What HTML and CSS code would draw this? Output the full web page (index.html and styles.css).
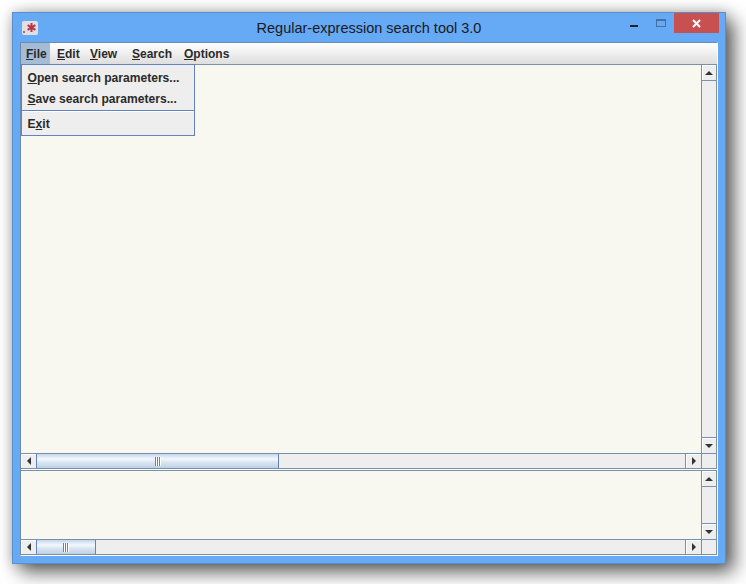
FILE: index.html
```html
<!DOCTYPE html>
<html lang="en">
<head>
<meta charset="utf-8">
<title>Regular-expression search tool 3.0</title>
<link rel="stylesheet" href="styles.css">
</head>
<body>
<div class="window">
  <header class="titlebar">
    <span class="appicon"><svg width="16" height="14" viewBox="0 0 16 14"><rect x="0" y="0" width="16" height="14" rx="2" fill="#e2dfe0"/><rect x="1" y="10" width="2" height="2" fill="#c0606c"/><path d="M9.5 2v9M5.6 4.2l7.8 4.6M13.4 4.2l-7.8 4.6" stroke="#b8364a" stroke-width="2" fill="none"/></svg></span>
    <span class="title">Regular-expression search tool 3.0</span>
    <div class="controls">
      <span class="ctl min"></span>
      <span class="ctl max"></span>
      <span class="ctl close"><svg width="9" height="9" viewBox="0 0 9 9"><path d="M1 1l7 7M8 1l-7 7" stroke="#fff" stroke-width="2" fill="none"/></svg></span>
    </div>
  </header>
  <div class="client">
    <nav class="menubar">
      <span class="menu m-file active"><u>F</u>ile</span>
      <span class="menu m-edit"><u>E</u>dit</span>
      <span class="menu m-view"><u>V</u>iew</span>
      <span class="menu m-search"><u>S</u>earch</span>
      <span class="menu"><u>O</u>ptions</span>
    </nav>
    <div class="dropdown">
      <div class="item"><u>O</u>pen search parameters...</div>
      <div class="item"><u>S</u>ave search parameters...</div>
      <div class="sep"></div>
      <div class="item exit">E<u>x</u>it</div>
    </div>
    <section class="pane top">
      <div class="text"></div>
      <div class="vbar">
        <span class="btn up"><i></i></span>
        <span class="track"></span>
        <span class="btn down"><i></i></span>
      </div>
      <div class="hbar">
        <span class="btn left"><i></i></span>
        <span class="htrack"><span class="thumb wide"><b></b></span></span>
        <span class="btn right"><i></i></span>
      </div>
      <div class="corner"></div>
    </section>
    <div class="divider"></div>
    <section class="pane bottom">
      <div class="text"></div>
      <div class="vbar">
        <span class="btn up"><i></i></span>
        <span class="track"></span>
        <span class="btn down"><i></i></span>
      </div>
      <div class="hbar">
        <span class="btn left"><i></i></span>
        <span class="htrack"><span class="thumb narrow"><b></b></span></span>
        <span class="btn right"><i></i></span>
      </div>
      <div class="corner"></div>
    </section>
  </div>
</div>
</body>
</html>
```
FILE: styles.css
```css
* { box-sizing: border-box; }
html, body { margin: 0; height: 584px; background: #fff; overflow: hidden; }
body { padding: 12px 20px 20px 12px; font-family: "Liberation Sans", Arial, sans-serif; }
.window {
  width: 714px; height: 552px;
  background: #66a9f5;
  border: 1px solid #5b8fc9;
  padding: 0 7px 7px;
  display: flex; flex-direction: column;
  box-shadow: 8px 8px 18px rgba(0,0,0,.62), 0 0 12px rgba(0,0,0,.22);
}
.titlebar { height: 29px; flex: none; display: flex; align-items: center; position: relative; }
.appicon { width: 16px; height: 14px; margin-left: 2px; margin-top: 1px; display: flex; }
.title { position: absolute; left: 0; right: 0; top: 6px; text-align: center; font-size: 14.5px; line-height: 18px; color: #1a1a1a; }
.controls { position: absolute; right: -1px; top: 0; display: flex; height: 20px; }
.ctl { display: flex; align-items: center; justify-content: center; }
.min { width: 8px; height: 2px; background: #222; margin-top: 12px; margin-right: 18px; }
.max { width: 10px; height: 8px; border: 1px solid #46709f; border-top-width: 2px; margin-top: 6px; margin-right: 8px; }
.close { width: 45px; height: 20px; background: #c75050; }
.client {
  flex: 1; background: #fff;
  border-top: 1px solid #6d8db0; border-left: 1px solid #6b89a8; border-right: 1px solid #fff; border-bottom: 1px solid #fff;
  display: flex; flex-direction: column; position: relative;
  overflow: hidden;
}
.menubar {
  height: 22px; flex: none; display: flex;
  background: linear-gradient(#ffffff, #dedede);
  border-bottom: 1px solid #7a8fa8;
  font-size: 12px; font-weight: bold; color: #2a2a2a;
}
.menu { padding: 1px 0 0 7px; line-height: 20px; }
.m-file { width: 29px; padding-left: 5px; }
.m-edit { width: 33px; }
.m-view { width: 42px; }
.m-search { width: 52px; }
.active { background: #a4bcd6; }
.dropdown {
  position: absolute; left: 0; top: 21px; width: 174px; z-index: 2;
  background: #eeeeee; border: 1px solid #6382bf;
  font-size: 12.1px; font-weight: bold; color: #2a2a2a;
  padding-top: 3px;
}
.item { height: 21px; line-height: 20px; padding-left: 5.5px; }
.sep { height: 1px; background: #6382bf; margin: 0 0 3px; box-shadow: 0 1px 0 #fff; }
.pane { display: grid; grid-template-columns: 681px 14px; background: #eeeeee; border-right: 1px solid #7a8fa8; border-bottom: 1px solid #7a8fa8; }
.top { grid-template-rows: 389px 14px; }
.bottom { grid-template-rows: 69px 14px; border-top: 1px solid #7a8fa8; }
.divider { height: 1px; background: #fff; flex: none; }
.text { background: #f8f7f0; border-right: 1px solid #7a8fa8; border-bottom: 1px solid #7a8fa8; }
.vbar { display: flex; flex-direction: column; background: #eeeeee; border-bottom: 1px solid #7a8fa8; }
.track { flex: 1; }
.hbar { display: flex; height: 14px; background: #eeeeee; border-right: 1px solid #7a8fa8; }
.htrack { flex: 1; display: flex; }
.corner { background: #eeeeee; }
.btn { flex: none; display: flex; align-items: center; justify-content: center; background: #eeeeee; }
.vbar .btn { height: 16px; }
.vbar .up { border-bottom: 1px solid #7a8fa8; box-shadow: inset 1px 1px 0 #fff; }
.vbar .down { border-top: 1px solid #7a8fa8; box-shadow: inset 1px 1px 0 #fff; }
.hbar .btn { width: 16px; }
.hbar .left { border-right: 1px solid #6382bf; box-shadow: inset 1px 1px 0 #fff; }
.hbar .right { border-left: 1px solid #7a8fa8; box-shadow: inset 1px 1px 0 #fff; }
.btn i { display: block; width: 0; height: 0; border-style: solid; border-color: transparent; }
.up i { border-width: 0 4px 4px; border-bottom-color: #333; }
.down i { border-width: 4px 4px 0; border-top-color: #333; }
.left i { border-width: 4px 4px 4px 0; border-right-color: #333; }
.right i { border-width: 4px 0 4px 4px; border-left-color: #333; }
.thumb {
  display: flex; align-items: center; justify-content: center; height: 14px;
  background: linear-gradient(#c3d6ea, #e9f1fa 28%, #f4f8fc 36%, #dbe6f2 58%, #bcd0e7);
  border-right: 1px solid #6382bf;
}
.wide { width: 242px; }
.narrow { width: 59px; }
.thumb b { width: 6px; height: 9px; background: repeating-linear-gradient(90deg, #6382bf 0 1px, #fff 1px 2px); }
```
